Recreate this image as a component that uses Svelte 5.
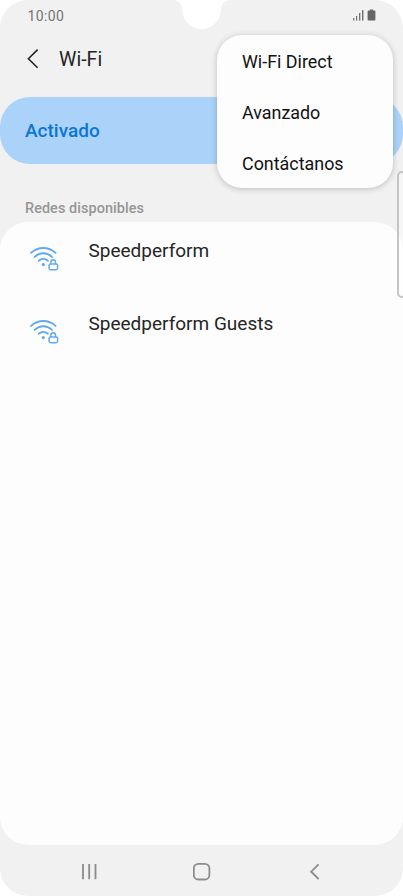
<script>
	const networks = ['Speedperform', 'Speedperform Guests'];
	const menuItems = ['Wi-Fi Direct', 'Avanzado', 'Contáctanos'];

	let menuOpen = true;
</script>

<div class="phone">
	<div class="status-bar">
		<span class="time">10:00</span>
		<svg class="status-icons" width="24" height="13" viewBox="0 0 24 13">
			<g fill="#666">
				<rect x="0.2" y="9" width="1.1" height="2.6" />
				<rect x="3.1" y="7" width="1.1" height="4.6" />
				<rect x="6.1" y="4" width="1.2" height="7.6" />
				<rect x="9.1" y="1" width="1.3" height="10.6" />
				<path d="M17 .4h3.2v1.2h1.2q1 0 1 1v8q0 1-1 1h-5.8q-1 0-1-1V2.6q0-1 1-1H17z" />
			</g>
		</svg>
	</div>

	<!-- Camera notch -->
	<svg class="notch" width="58" height="30" viewBox="0 0 58 30">
		<path d="M0 0C6 .5 9 4 9 9.5C9.5 21 18 29 28.5 29S47.5 21 48 9.5C48 4 52 .5 58 0z" fill="#fff" />
	</svg>

	<header>
		<button class="back" aria-label="Atrás">
			<svg width="14" height="22" viewBox="0 0 14 22">
				<path d="M11.6 1.6L2.4 10.7L11.6 19.8" fill="none" stroke="#252525" stroke-width="1.6" />
			</svg>
		</button>
		<h1>Wi-Fi</h1>
	</header>

	<div class="toggle">Activado</div>

	<h2>Redes disponibles</h2>

	<ul class="networks">
		{#each networks as network}
			<li>
				<svg
					class="wifi-icon"
					width="32"
					height="28"
					viewBox="0 0 32 28"
					fill="none"
					stroke="#62a9ee"
					stroke-width="1.9"
					stroke-linecap="round"
				>
					<path d="M2 7.9Q7.5 3 14.3 3T26.6 7.9" />
					<path d="M5.6 11.9Q9.6 8.3 14.3 8.3T23 11.9" />
					<path d="M9.8 15.8Q11.8 13.9 14.3 13.9T18.8 15.8" />
					<circle cx="14.3" cy="19.6" r="1.6" fill="#62a9ee" stroke="none" />
					<rect x="20.1" y="18.9" width="8.5" height="5.8" rx="1.4" stroke-width="1.5" />
					<path d="M21.9 18.6V17a2.3 2.3 0 0 1 4.6 0V18.6" stroke-width="1.5" />
				</svg>
				<span>{network}</span>
			</li>
		{/each}
	</ul>

	<nav>
		<svg width="18" height="18" viewBox="0 0 18 18" stroke="#8b8b8b" stroke-width="1.8">
			<path d="M3 1.1v15.2M9.2 1.1v15.2M15.5 1.1v15.2" />
		</svg>
		<svg width="18" height="18" viewBox="0 0 18 18" fill="none" stroke="#8b8b8b" stroke-width="1.8">
			<rect x="0.8" y="0.9" width="15.6" height="15.6" rx="4.6" />
		</svg>
		<svg width="18" height="18" viewBox="0 0 18 18" fill="none" stroke="#8b8b8b" stroke-width="1.8">
			<path d="M12.6 1.4L5.2 8.7L12.6 16" />
		</svg>
	</nav>

	<!-- Edge panel handle -->
	<div class="edge-handle"></div>

	{#if menuOpen}
		<div class="menu">
			{#each menuItems as item}
				<button class="item" on:click={() => (menuOpen = false)}>{item}</button>
			{/each}
		</div>
	{/if}
</div>

<style>
	:global(body) {
		background: #fff;
	}

	.phone {
		position: relative;
		display: flex;
		flex-direction: column;
		width: 403px;
		height: 896px;
		overflow: hidden;
		border-radius: 28px;
		background: #f1f1f1;
		color: #252525;
		font-family: Roboto, sans-serif;
	}

	button {
		padding: 0;
		border: 0;
		background: none;
		color: inherit;
		font: inherit;
	}

	svg {
		display: block;
	}

	.status-bar {
		display: flex;
		justify-content: space-between;
		height: 31px;
		padding: 0 26px 0 27.5px;
		box-sizing: border-box;
	}

	.time {
		color: #747474;
		font-size: 14px;
		line-height: 32px;
		letter-spacing: 0.35px;
	}

	.status-icons {
		margin-top: 9px;
	}

	.notch {
		position: absolute;
		top: 0;
		left: 173px;
	}

	header {
		display: flex;
		align-items: center;
		height: 56px;
		padding-left: 26px;
		margin-bottom: 9.5px;
	}

	.back {
		width: 33px;
	}

	h1 {
		margin: 2px 0 0;
		font-size: 19.6px;
		font-weight: 400;
		line-height: 24px;
	}

	.toggle {
		height: 67px;
		padding-left: 25px;
		border-radius: 30px;
		background: #abd2f9;
		color: #0b76d8;
		font-size: 19px;
		font-weight: 500;
		line-height: 68px;
	}

	h2 {
		height: 58.5px;
		margin: 0;
		padding: 35px 25px 0;
		box-sizing: border-box;
		color: #969696;
		font-size: 14.4px;
		font-weight: 500;
		line-height: 19px;
		letter-spacing: 0.08px;
	}

	.networks {
		flex: 1;
		margin: 0;
		padding: 0;
		border-radius: 28px;
		background: #fdfdfd;
		list-style: none;
	}

	li {
		display: flex;
		height: 73.5px;
		padding-left: 29px;
		font-size: 19px;
	}

	.wifi-icon {
		margin: 22.7px 27.5px 0 0;
	}

	li span {
		margin-top: 16.6px;
		line-height: 24px;
	}

	nav {
		display: flex;
		justify-content: space-between;
		height: 51px;
		padding: 18px 79px 0 80px;
		box-sizing: border-box;
	}

	.edge-handle {
		position: absolute;
		top: 171px;
		right: -6px;
		width: 12px;
		height: 127px;
		box-sizing: border-box;
		border: 2px solid #c4c4c4;
		border-radius: 5px;
		background: rgba(255, 255, 255, 0.35);
	}

	.menu {
		position: absolute;
		top: 35px;
		left: 217px;
		display: flex;
		flex-direction: column;
		width: 176px;
		height: 153px;
		border-radius: 25px;
		background: #fdfdfd;
		box-shadow: 0 1px 6px rgba(0, 0, 0, 0.22);
	}

	.item {
		flex: 1;
		padding: 2px 0 0 25px;
		color: #111;
		font-size: 17.9px;
		text-align: left;
	}
</style>
